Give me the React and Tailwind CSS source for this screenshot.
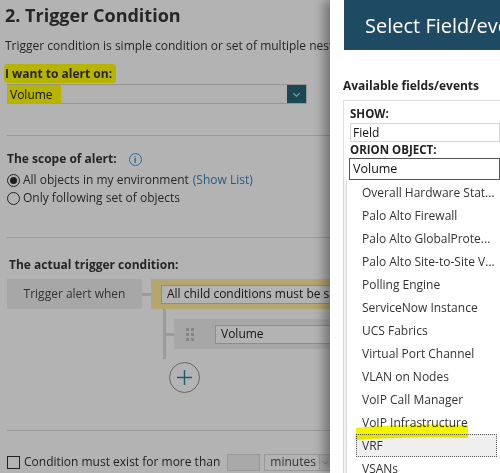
import React from "react";

const items = [
  "Overall Hardware Stat...",
  "Palo Alto Firewall",
  "Palo Alto GlobalProte...",
  "Palo Alto Site-to-Site V...",
  "Polling Engine",
  "ServiceNow Instance",
  "UCS Fabrics",
  "Virtual Port Channel",
  "VLAN on Nodes",
  "VoIP Call Manager",
  "VoIP Infrastructure",
  "VRF",
  "VSANs",
];

function Chevron({ className }) {
  return (
    <svg viewBox="0 0 12 12" className={className} fill="none" stroke="currentColor" strokeWidth="1.2">
      <path d="M2.5 4.5 L6 8 L9.5 4.5" />
    </svg>
  );
}

export default function App() {
  return (
    <div
      className="flex w-[500px] h-[473px] overflow-hidden bg-[#b3b3b3] text-[12px] text-[#262626]"
      style={{ fontFamily: '"Open Sans", "Noto Sans", sans-serif' }}
    >
      {/* Left dimmed panel */}
      <div className="w-[330px] flex-none flex flex-col *:shrink-0 overflow-hidden pl-[5px] whitespace-nowrap">
        <div className="text-[18px] font-bold leading-[24px] mt-[3px] text-[#262626]">2. Trigger Condition</div>
        <div className="leading-[16px] mt-[11px]">Trigger condition is simple condition or set of multiple nested conditions.</div>
        <div className="mt-[11px] leading-[18px] font-bold">
          <span className="bg-[#b6b400] pr-[4px] -ml-[1px] pl-[1px] py-[1px] rounded-sm">I want to alert on:</span>
        </div>
        <div className="mt-[1px] ml-[2px] w-[300px] h-[20px] flex *:shrink-0 border border-[#959595] bg-[#b1b1b1]">
          <div className="flex-1 flex items-center pl-[2px] text-[12px] text-[#111]">
            <span className="bg-[#b6b400] pr-[8px] -ml-[3px] pl-[3px] leading-[19px]">Volume</span>
          </div>
          <div className="w-[19px] bg-[#1b4753] flex items-center justify-center text-[#8aa2aa]">
            <Chevron className="w-[11px] h-[11px]" />
          </div>
        </div>
        <div className="mt-[31px] ml-[2px] h-px bg-[#999999]" />
        <div className="mt-[16px] ml-[2px] flex items-center font-bold leading-[14px]">
          The scope of alert:
          <span className="ml-[12px] w-[13px] h-[13px] rounded-full border border-[#2e6a92] text-[#2e6a92] text-[9px] flex items-center justify-center font-bold leading-none">
            i
          </span>
        </div>
        <div className="mt-[6px] ml-[2px] flex items-center leading-[16px]">
          <span className="w-[13px] h-[13px] rounded-full border border-[#222] flex items-center justify-center mr-[3px]">
            <span className="w-[7px] h-[7px] rounded-full bg-[#1f1f1f]" />
          </span>
          All objects in my environment <span className="ml-[4px] text-[#245c82]">(Show List)</span>
        </div>
        <div className="mt-[2px] ml-[2px] flex items-center leading-[16px]">
          <span className="w-[13px] h-[13px] rounded-full border border-[#222] mr-[3px]" />
          Only following set of objects
        </div>
        <div className="mt-[31px] ml-[2px] h-px bg-[#999999]" />
        <div className="mt-[20px] ml-[4px] font-bold leading-[14px]">The actual trigger condition:</div>
        <div className="mt-[7px] ml-[2px] flex *:shrink-0 items-center h-[30px]">
          <div className="w-[135px] h-[30px] bg-[#a7a7a7] flex items-center justify-center text-[#333]">Trigger alert when</div>
          <div className="w-[9px] h-[3px] bg-[#9b9b9b]" />
          <div className="w-[200px] h-[30px] bg-[#b5a56f] flex items-center pl-[10px]">
            <div className="w-[200px] flex-none h-[19px] bg-[#b3b3b3] border border-[#8c8c8c] flex items-center pl-[5px] text-[#151515]">
              All child conditions must be satisfied
            </div>
          </div>
        </div>
        <div className="flex *:shrink-0 ml-[158px]">
          <div className="w-[3px] h-[50px] bg-[#9b9b9b]" />
          <div className="flex *:shrink-0 items-center mt-[10px] h-[30px]">
            <div className="w-[8px] h-[3px] bg-[#9b9b9b]" />
            <div className="w-[160px] h-[30px] bg-[#a7a7a7] flex *:shrink-0 items-center">
              <div className="ml-[12px] grid grid-cols-2 gap-x-[2px] gap-y-[2px]">
                {[0, 1, 2, 3, 4, 5].map((i) => (
                  <span key={i} className="w-[3px] h-[3px] bg-[#858585]" />
                ))}
              </div>
              <div className="ml-[21px] w-[120px] h-[19px] bg-[#b3b3b3] border border-[#8c8c8c] flex items-center pl-[5px] text-[#151515]">
                Volume
              </div>
            </div>
          </div>
        </div>
        <div className="mt-[3px] ml-[164px] w-[31px] h-[31px] rounded-full border-[1.5px] border-[#666] flex items-center justify-center">
          <svg viewBox="0 0 16 16" className="w-[17px] h-[17px]" stroke="#1d5d70" strokeWidth="1.3">
            <path d="M8 1 V15 M1 8 H15" />
          </svg>
        </div>
        <div className="mt-[37px] ml-[2px] h-px bg-[#999999]" />
        <div className="mt-[22px] ml-[2px] flex *:shrink-0 items-center h-[18px]">
          <span className="w-[13px] h-[13px] border border-[#222] mr-[4px]" />
          <span className="text-[#222]">Condition must exist for more than</span>
          <span className="ml-[7px] w-[33px] h-[17px] bg-[#a9a9a9] border border-[#9a9a9a]" />
          <span className="ml-[4px] w-[67px] h-[17px] border border-[#999] flex *:shrink-0 items-center">
            <span className="pl-[5px] w-[54px] text-[#333]">minutes</span>
            <span className="w-[12px] h-full bg-[#a9a9a9] border-l border-[#999] flex items-center justify-center text-[#777]">
              <Chevron className="w-[9px] h-[9px]" />
            </span>
          </span>
        </div>
      </div>

      {/* Right panel */}
      <div className="relative flex-1 bg-white shadow-[-6px_0_10px_rgba(0,0,0,0.35)] flex flex-col *:shrink-0 whitespace-nowrap overflow-hidden">
        <div className="ml-[14px] h-[50px] bg-[#1f4a63] flex items-center pl-[21px] text-white text-[20px] leading-none pt-[1px]">
          Select Field/events
        </div>
        <div className="mt-[29px] ml-[13px] font-bold text-[12px] leading-[14px] text-[#222]">Available fields/events</div>
        <div className="mt-[7px] ml-[13px] border border-[#dedede] border-r-0 pl-[6px] pt-[6px] flex flex-col *:shrink-0">
          <div className="font-bold text-[11.5px] leading-[14px] text-[#222]">SHOW:</div>
          <div className="mt-[2px] h-[19px] border border-[#d5d5d5] flex items-center pl-[2px] text-[#111]">Field</div>
          <div className="mt-[1px] font-bold text-[11.5px] leading-[14px] text-[#222]">ORION OBJECT:</div>
          <div className="mt-[1px] -ml-[1px] h-[22px] border border-[#555] flex items-center pl-[3px] text-[12.5px] text-[#111]">Volume</div>
          <div className="ml-[-4px] border-l border-[#ddd] shadow-[-2px_0_3px_rgba(0,0,0,0.08)] pt-[1px] flex flex-col *:shrink-0">
            {items.map((it) => (
              <div
                key={it}
                className={
                  "h-[23px] flex items-center text-[12px] text-[#333] " +
                  (it === "VRF"
                    ? "ml-[9px] pl-[5px] bg-[#efefef] border border-dotted border-[#555] mr-[3px]"
                    : "pl-[15px]")
                }
              >
                {it}
              </div>
            ))}
          </div>
        </div>
        <svg className="absolute left-[25px] top-[423px] w-[114px] h-[18px] mix-blend-multiply" viewBox="0 0 114 18">
          <path d="M1 5 Q40 0 113 2 L113 15 Q60 13 0 17 Z" fill="#f4f400" />
        </svg>
      </div>
    </div>
  );
}
